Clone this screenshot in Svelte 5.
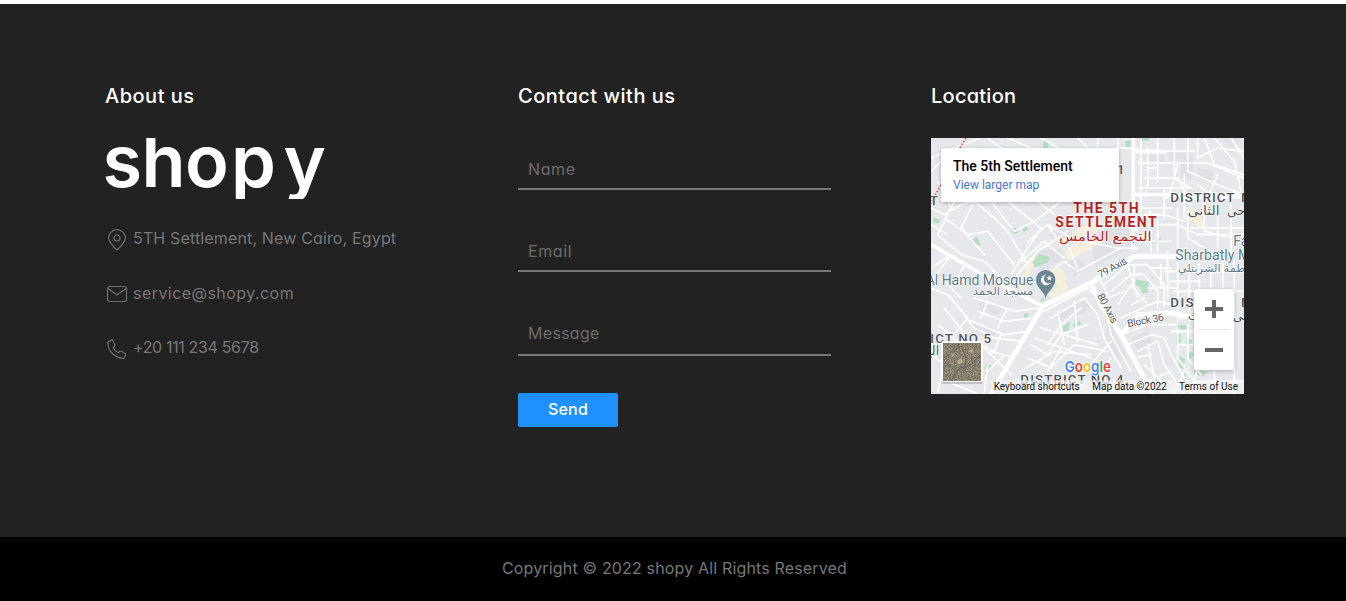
<script>
  const contacts = [
    { icon: 'pin', text: '5TH Settlement, New Cairo, Egypt', ls: 0.15 },
    { icon: 'mail', text: 'service@shopy.com', ls: 0.45 },
    { icon: 'phone', text: '+20 111 234 5678', ls: -0.35 }
  ];
  const minor = [
    'M0 60L70 30L150 0M170 0L210 30M230 0L300 30M330 0L380 28M0 100L30 70M440 0L470 30M500 0V30M560 0V36M545 30L620 30',
    'M0 210L40 230L90 200L130 190L190 240L230 280L290 380M70 190L20 290L90 350L160 370L230 440M130 190L90 270L160 350M40 240L110 290L170 280L250 380M180 190L250 280L310 250L390 190M230 190L330 270L290 330L240 410M20 130L60 210M0 260L50 290',
    'M290 310L350 260L420 300M270 370L340 310L400 360M250 420L320 340L410 280M320 190L370 230M400 300L440 390M350 260L390 320M460 310L560 330L620 330M330 420L400 370L440 400L570 330',
    'M0 390L60 350L160 410M0 450L50 470L110 540L60 600M30 420L90 480M60 350L10 420M100 380L70 440M130 480L250 520L320 510M140 520L220 550L310 540M110 545L220 590L290 580M60 480L130 570L190 600L270 610M40 510L110 600L190 640M20 560L80 610M180 640L250 660M230 510L200 570M170 490L150 540M210 590L190 640M160 630L240 710M170 700L220 650M0 650L40 680L20 760M60 735L140 768M170 680L160 768',
    'M340 520L470 450L520 500L540 590L600 700M360 540L460 480L500 530L520 600L570 690M350 620L390 560L450 510M300 620L350 650L390 590L470 560M330 570L500 620M310 600L480 660M380 520L400 620M430 490L440 610M290 660L360 690L430 620L530 640M270 700L370 640L480 650M350 700L390 630M540 660L500 730M540 610L470 690',
    'M520 440L590 380L650 380L700 440L700 500M540 460L600 410L640 410L680 460L680 510M560 500L600 440L650 500M530 480L580 460M570 540L680 490L720 500M600 500L640 480M500 410L530 470M610 380V450M590 380L620 480',
    'M630 0V240M650 30V150L700 150V240M680 0V100M730 0V120L780 150M770 0V100L860 140L939 170M800 0V60L860 30L939 40M620 40H790M620 75H830L939 120M620 150H780M640 120H740L780 200M650 90H680V130M820 0L850 80L939 110M850 0L910 70L930 160M900 0L939 60M740 80L720 160M760 110V240M700 180H939M630 210H720M800 140L850 180M860 110L820 200',
    'M640 260H740L800 290L939 290M660 280V340M680 250V340M640 310H720M640 230L700 230L760 250M740 210V350M770 220V300L820 330M820 200V280L900 300M860 220V330M900 180V350M780 270H939M620 260L660 220M610 270L650 310',
    'M710 340V480M740 340V550M775 360V550M805 380V490M840 390V460M875 370V480M910 370V768M700 400H939M710 430H800M730 460H939M730 500H800M740 540H810M720 390L660 390M690 380V450M650 450H740',
    'M570 590L650 560L740 560M590 620L660 590L700 600L720 650L760 720M620 640L680 610L700 680L760 768M640 680L700 740M650 620L670 720M610 660L660 650M740 570V660L790 730L939 730M770 560V660L810 710M720 580H800M740 620H800M760 700L730 768M800 690L780 768M850 700V768M650 730L720 700'
  ];
  const blocks = [
    'M640 50H700V68H640zM715 40H785V68H715zM650 160H690V180H650zM800 90L850 100L840 130L800 120zM870 0L900 30L930 20L925 0z',
    'M480 290L590 240L600 330L490 385zM350 290L400 260L440 290L390 320zM410 370L440 360L470 390L430 415zM300 340L390 330L400 360L330 400z',
    'M370 530L460 480L480 510L390 555zM150 490L220 510L200 530L140 515zM120 550L200 580L190 600L140 590z',
    'M540 560L590 660L560 670L520 590zM600 600L650 580L670 620L620 640zM750 60L790 70L780 130L750 120z'
  ];
  const greens = [
    'M336 8H352V32H336zM583 8H601V30H583zM625 0H655V8H625zM8 238L28 245L22 257L5 252zM117 310L138 295L151 326zM240 274L255 268L263 282L248 289zM272 266L287 261L292 276L278 282zM304 372L325 348L357 357L350 374L312 388zM38 188L60 190L50 202z',
    'M606 346H618V357H606zM655 315L688 300V316H658zM613 424L653 432L650 465L632 466L630 448L612 440zM278 528L290 525L292 537L280 541zM394 566L418 549L414 575L398 582zM426 558L446 548L452 557L430 567z',
    'M740 562H768V574H740zM736 590L749 588V620H736zM765 600L782 605V625L764 622zM742 654L762 662L757 695L744 686zM775 640L790 647L774 671zM165 674L185 684L177 700L160 691zM750 710L763 702V718zM790 697L830 701L816 714L788 710zM326 490L338 477L342 490z'
  ];
  // Aerial thumbnail: small patches in earth tones
  const cells = [];
  let seed = 17;
  const rnd = () => (seed = (seed * 16807) % 2147483647) / 2147483647;
  const tones = ['#7c7567', '#8a806c', '#958a72', '#746f64', '#857c6a', '#a2967e', '#7a796f', '#8f8570'];
  for (let i = 0; i < 38; i++)
    for (let j = 0; j < 38; j++)
      cells.push({ x: 36 + i * 3, y: 615 + j * 3, c: tones[Math.floor(rnd() * 8)] });
</script>

<footer>
  <div class="main">
    <section>
      <h2 class="wide">About us</h2>
      <svg class="logo" width="222" height="61" viewBox="0 0 222 61" role="img" aria-label="shopy">
        <text y="49" x="-2.500 36.500 80 126 178.500">shopy</text>
      </svg>
      <ul>
        {#each contacts as c}
          <li>
            <svg width="24" height="24" viewBox="0 0 24 24" class="ico">
              {#if c.icon === 'pin'}
                <path d="M12 22.200C8 18 3.600 14 3.600 10a8.400 8.400 0 0 1 16.800 0c0 4-4.400 8-8.400 12.200z" /><circle cx="12" cy="10" r="3" />
              {:else if c.icon === 'mail'}
                <rect x="2.500" y="3.500" width="19" height="15" rx="2" /><path d="M3 5.500l9 6.500l9-6.500" />
              {:else}
                <path d="M3.200 4.700l3-1.600q1-.4 1.600.6l2 3.800q.4.900-.3 1.700l-1.300 1.500c1 2.400 2.700 4 5 5l1.500-1.300q.8-.7 1.700-.2l3.600 2q.9.600.6 1.600l-1.100 2.700q-.4.900-1.500.8C9.500 20.500 3.400 14.500 2.700 6z" />
              {/if}
            </svg>
            <span style="letter-spacing:{c.ls}px">{c.text}</span>
          </li>
        {/each}
      </ul>
    </section>

    <section>
      <h2 class="wide">Contact with us</h2>
      <form onsubmit={(e) => e.preventDefault()}>
        <input placeholder="Name" aria-label="Name" />
        <input placeholder="Email" aria-label="Email" />
        <textarea placeholder="Message" aria-label="Message"></textarea>
        <button>Send</button>
      </form>
    </section>

    <section>
      <h2>Location</h2>
      <div class="map">
        <svg width="313" height="256" viewBox="0 0 939 768">
          <rect width="939" height="768" fill="#e6e8ec" />
          {#each blocks as d}<path {d} fill="#dfe1e6" />{/each}
          <path d="M400 340L480 290L520 310L410 370zM355 470L400 430L415 455L365 480zM350 400L390 390L410 420L380 450zM770 205L800 220L825 270L810 275L770 235zM420 285L500 245L520 270L430 315zM260 430L320 330L300 400L275 460z" fill="#f5efdb" />
          {#each greens as d}<path {d} fill="#b5dfc3" />{/each}
          <g fill="none" stroke="#fff" stroke-linejoin="round" stroke-linecap="round">
            {#each minor as d}<path {d} stroke-width="5" />{/each}
            <path d="M0 320L120 390L230 450L335 505M607 0V330M607 170H939M610 40H700" stroke-width="11" />
            <path d="M335 505L480 435L610 355H740M480 435L510 500L570 590L665 768M570 590L620 530L720 525L800 540" stroke-width="15" />
            <path d="M335 505L220 700L180 768" stroke-width="15" />
          </g>
          <path d="M105 0L82 38M34 132L0 195" stroke="#df5c55" stroke-width="5" stroke-dasharray="5 5" fill="none" />
          <g class="district">
            <text x="718" y="193" textLength="192">DISTRICT</text><text x="930" y="193">N</text>
            <text x="718" y="507" textLength="70">DIS</text><text x="930" y="507">N</text>
            <text x="-2" y="615" textLength="182">ICT NO 5</text>
            <text x="268" y="738" textLength="310">DISTRICT NO 4</text>
            <text x="-4" y="201">T</text><text x="558" y="108">1</text>
          </g>
          <g class="arabic">
            <text x="770" y="232" textLength="96" lengthAdjust="spacingAndGlyphs">الثانى</text><text x="888" y="232">حى</text>
            <text x="770" y="546">ث</text><text x="905" y="546">حى</text><text x="-22" y="652">الح</text>
          </g>
          <g class="red">
            <text x="427" y="224" textLength="196">THE 5TH</text>
            <text x="373" y="267" textLength="304">SETTLEMENT</text>
            <text class="ar" x="384" y="308" textLength="278" lengthAdjust="spacingAndGlyphs">التجمع الخامس</text>
          </g>
          <g class="place">
            <text x="-16" y="441" textLength="323">Al Hamd Mosque</text>
            <text class="ar" x="125" y="472" textLength="182" lengthAdjust="spacingAndGlyphs">مسجد الحمد</text>
            <text x="733" y="365" textLength="225">Sharbatly M</text><text x="907" y="323">Fa</text>
            <text class="ar" x="740" y="402" textLength="230" lengthAdjust="spacingAndGlyphs">فاطمة الشربتلي</text>
          </g>
          <path d="M344 482C340 458 315 450 315 425a29 29 0 0 1 58 0C373 450 348 458 344 482z" fill="#6b8791" />
          <path d="M345 410a16 16 0 1 0 15 24a14 14 0 0 1-15-24z" fill="#fff" /><path d="M355 411l2.500 6 6 .5-4.500 4 1.500 6-5.500-3-5 3 1-6-4.500-4 6-.5z" fill="#fff" />
          <g class="road">
            <text transform="translate(508 421) rotate(-29)" textLength="94">79 Axis</text>
            <text transform="translate(498 473) rotate(62)" textLength="96">80 Axis</text>
            <text transform="translate(591 568) rotate(-11)" textLength="111">Block 36</text>
          </g>
          <path d="M180 727H939V768H180z" fill="#f5f5f5" opacity=".7" />
          <text class="google" x="401" y="703" textLength="139" lengthAdjust="spacingAndGlyphs"><tspan fill="#4285f4">G</tspan><tspan fill="#ea4335">o</tspan><tspan fill="#fbbc05">o</tspan><tspan fill="#4285f4">g</tspan><tspan fill="#34a853">l</tspan><tspan fill="#ea4335">e</tspan></text>
          <g class="legal">
            <text x="188" y="756" textLength="258">Keyboard shortcuts</text>
            <text x="484" y="756" textLength="223">Map data ©2022</text>
            <text x="744" y="756" textLength="177">Terms of Use</text>
          </g>
          <rect x="30" y="611" width="126" height="126" rx="6" fill="#0003" />
          <rect x="30" y="609" width="126" height="123" rx="5" fill="#fff" />
          <g shape-rendering="crispEdges">
            {#each cells as c}<rect x={c.x} y={c.y} width="3" height="3" fill={c.c} />{/each}
          </g>
          <path d="M40 660L70 640L85 618M60 728L85 690L120 680L148 650M90 620L105 660L100 700" stroke="#4d4e48" stroke-width="3" opacity=".5" fill="none" />
          <path d="M78 668L90 660L96 672L84 680zM112 640L124 634L128 646zM60 645L70 650L64 658z" fill="#c9b88e" opacity=".8" />
        </svg>
        <div class="card"><strong>The 5th Settlement</strong><a href="#map">View larger map</a></div>
        <div class="zoom"><i class="plus"></i><hr /><i></i></div>
      </div>
    </section>
  </div>
  <div class="copy">Copyright © 2022 shopy All Rights Reserved</div>
</footer>

<style>
  :global(body) { margin: 0; overflow: hidden; background: #fff; }
  footer { margin-top: 4px; font-family: Inter, sans-serif; font-feature-settings: 'cv11'; font-size: 16px; color: #777; }
  .main { display: grid; grid-template-columns: repeat(3, 313px); column-gap: 100px; height: 533px; padding: 77px 102px 0 105px; box-sizing: border-box; background: #222; }
  h2 { margin: 0 0 27px; color: #fff; font-size: 20px; font-weight: 500; line-height: 30px; letter-spacing: 0.25px; }
  h2.wide { letter-spacing: 0.5px; }
  section > svg, .map > svg { display: block; }
  .logo { overflow: hidden; }
  .logo text { font: 600 72px Inter, sans-serif; font-feature-settings: 'cv11'; fill: #fff; }
  ul { display: grid; gap: 30.5px; margin: 27px 0 0; padding: 0; list-style: none; }
  li { display: flex; align-items: center; height: 24px; gap: 4px; white-space: nowrap; }
  .ico { fill: none; stroke: #6f6f6f; stroke-width: 1.2; stroke-linejoin: round; position: relative; top: 2px; }
  form { display: flex; flex-direction: column; align-items: flex-start; padding-top: 12px; }
  input, textarea { box-sizing: border-box; width: 313px; height: 40px; margin: 0 0 42px; padding: 0 10px; border: 0; border-bottom: 2px solid #777; background: none; font: inherit; letter-spacing: 0.6px; outline: 0; resize: none; overflow: hidden; }
  textarea { height: 42px; margin-bottom: 37px; padding-top: 7px; line-height: 24px; letter-spacing: 0.3px; }
  input::placeholder, textarea::placeholder { color: #6c6c6c; opacity: 1; }
  button { width: 100px; height: 34px; padding: 0 0 2px; border: 0; border-radius: 2px; background: #1e90ff; color: #fff; font: 500 16px Inter, sans-serif; letter-spacing: 0.2px; }
  .copy { height: 64px; padding-left: 3px; background: #000; text-align: center; line-height: 62px; letter-spacing: 0.16px; }
  .map { position: relative; width: 313px; height: 256px; overflow: hidden; font-family: Roboto, sans-serif; }
  .map text { font-family: Roboto, 'DejaVu Sans', sans-serif; }
  .district text { font-size: 40px; font-weight: 500; fill: #505357; }
  .arabic text { font-size: 38px; fill: #505357; }
  .red text { font-size: 42px; font-weight: 700; fill: #b3261e; }
  .red .ar { font-weight: 400; font-size: 40px; }
  .place text { font-size: 42px; fill: #5e7b86; }
  .place .ar { font-size: 33px; }
  .road text { font-size: 31px; fill: #55585c; }
  text { paint-order: stroke; }
  .district text, .arabic text, .red text, .place text, .road text { stroke: #fff; stroke-width: 4px; stroke-linejoin: round; }
  .map .google { font: 600 45px Inter, sans-serif; font-feature-settings: normal; stroke: #fff; stroke-width: 5px; }
  .legal text { font-size: 30px; fill: #111; }
  .card { position: absolute; left: 10px; top: 10px; box-sizing: border-box; width: 178px; height: 54px; padding: 9px 12px; display: flex; flex-direction: column; background: #fff; border-radius: 2px; box-shadow: 0 1px 4px #0004; }
  .card > * { align-self: flex-start; white-space: nowrap; }
  strong { color: #000; font-size: 14px; font-weight: 500; line-height: 18px; }
  a { color: #4a78cf; font-size: 12px; line-height: 20px; text-decoration: none; }
  .zoom { position: absolute; right: 10px; top: 151px; width: 40px; height: 81px; background: #fff; border-radius: 2px; box-shadow: 0 1px 4px #0004; display: grid; grid-template-rows: 40px 1px 40px; place-items: center; }
  .zoom hr { width: 30px; height: 1px; margin: 0; border: 0; background: #e6e6e6; }
  .zoom i { width: 18px; height: 4px; background: #666; }
  .zoom .plus { height: 18px; background: linear-gradient(#666, #666) center / 18px 4px no-repeat, linear-gradient(#666, #666) center / 4px 18px no-repeat; }
</style>
